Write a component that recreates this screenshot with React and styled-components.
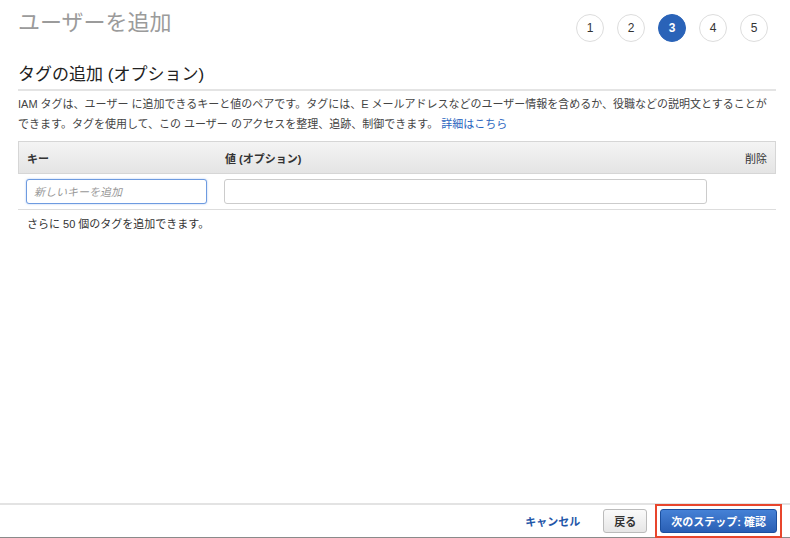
import styled, { createGlobalStyle } from "styled-components"

const GlobalStyle = createGlobalStyle`
    html, body {
        margin: 0;
        padding: 0;
        height: 100%;
        background: #ffffff;
    }
    body {
        font-family: "Liberation Sans", "Noto Sans CJK JP", sans-serif;
        color: #333333;
    }
    #root {
        height: 100%;
    }
`

const steps = [1, 2, 3, 4, 5]

export default function App() {
    return (
        <>
            <GlobalStyle />
            <Pagina>
                <Conteudo>
                    <Cabecalho>
                        <Titulo>ユーザーを追加</Titulo>
                        <Passos>
                            {steps.map((n) => (
                                <Passo key={n} ativo={n === 3}>{n}</Passo>
                            ))}
                        </Passos>
                    </Cabecalho>

                    <Secao>タグの追加 (オプション)</Secao>
                    <Descricao>
                        IAM タグは、ユーザー に追加できるキーと値のペアです。タグには、E メールアドレスなどのユーザー情報を含めるか、役職などの説明文とすることができます。タグを使用して、この ユーザー のアクセスを整理、追跡、制御できます。 <Link href="#">詳細はこちら</Link>
                    </Descricao>

                    <Tabela>
                        <Cabeca>
                            <ColChave>キー</ColChave>
                            <ColValor>値 (オプション)</ColValor>
                            <ColExcluir>削除</ColExcluir>
                        </Cabeca>
                        <Linha>
                            <ColChave>
                                <Campo foco placeholder="新しいキーを追加" />
                            </ColChave>
                            <ColValor>
                                <Campo />
                            </ColValor>
                            <ColExcluir />
                        </Linha>
                    </Tabela>
                    <Restante>さらに 50 個のタグを追加できます。</Restante>
                </Conteudo>

                <Rodape>
                    <Cancelar href="#">キャンセル</Cancelar>
                    <Voltar>戻る</Voltar>
                    <Destaque>
                        <Proximo>次のステップ: 確認</Proximo>
                    </Destaque>
                </Rodape>
            </Pagina>
        </>
    )
}

const Pagina = styled.div`
    display: flex;
    flex-direction: column;
    height: 538px;
    box-sizing: border-box;
    border-bottom: 1px solid #8a8a8a;
`

const Conteudo = styled.div`
    flex: 1;
    padding: 0 14px 0 18px;
`

const Cabecalho = styled.div`
    display: flex;
    justify-content: space-between;
    align-items: flex-start;
    height: 56px;
`

const Titulo = styled.h1`
    margin: 9px 0 0 0;
    font-size: 22px;
    line-height: 28px;
    font-weight: 400;
    color: #9b9b9b;
`

const Passos = styled.div`
    display: flex;
    gap: 13px;
    margin-top: 14px;
    margin-right: 8px;
`

const Passo = styled.div`
    width: 28px;
    height: 28px;
    box-sizing: border-box;
    border-radius: 50%;
    display: flex;
    align-items: center;
    justify-content: center;
    font-size: 12px;
    font-weight: ${(props) => (props.ativo ? 700 : 400)};
    color: ${(props) => (props.ativo ? "#ffffff" : "#333333")};
    background: ${(props) => (props.ativo ? "#2a63b8" : "#ffffff")};
    border: 1px solid ${(props) => (props.ativo ? "#2a63b8" : "#dddddd")};
`

const Secao = styled.h2`
    margin: 8px 0 0 0;
    padding-bottom: 3px;
    font-size: 17px;
    line-height: 22px;
    font-weight: 400;
    color: #222222;
    border-bottom: 2px solid #e4e4e4;
`

const Descricao = styled.p`
    margin: 3px 0 0 0;
    font-size: 11px;
    line-height: 20px;
    color: #444444;
`

const Link = styled.a`
    color: #2b66c0;
    text-decoration: none;
`

const Tabela = styled.div`
    margin-top: 7px;
    border-bottom: 1px solid #dddddd;
`

const Cabeca = styled.div`
    display: flex;
    align-items: center;
    height: 33px;
    box-sizing: border-box;
    background: linear-gradient(#f4f4f4, #e4e4e4);
    border: 1px solid #d6d6d6;
    font-size: 11px;
    font-weight: 700;
    color: #333333;
`

const Linha = styled.div`
    display: flex;
    align-items: center;
    height: 35px;
`

const ColChave = styled.div`
    width: 206px;
    padding: 0 17px 0 8px;
    box-sizing: border-box;
`

const ColValor = styled.div`
    width: 483px;
    box-sizing: border-box;
`

const ColExcluir = styled.div`
    flex: 1;
    text-align: right;
    padding-right: 8px;
    font-weight: 400;
`

const Campo = styled.input`
    display: block;
    width: 100%;
    height: 25px;
    box-sizing: border-box;
    border-radius: 3px;
    border: 1px solid ${(props) => (props.foco ? "#6e9be0" : "#cccccc")};
    box-shadow: ${(props) => (props.foco ? "0 0 2px rgba(80, 140, 230, 0.5)" : "none")};
    padding: 0 7px;
    font-family: "Liberation Sans", "Noto Sans CJK JP", sans-serif;
    font-size: 11px;
    outline: none;
    &::placeholder {
        color: #999999;
        font-style: italic;
    }
`

const Restante = styled.p`
    margin: 6px 0 0 9px;
    font-size: 11px;
    line-height: 16px;
    color: #333333;
`

const Rodape = styled.div`
    display: flex;
    align-items: center;
    justify-content: flex-end;
    height: 34px;
    box-sizing: border-box;
    border-top: 2px solid #e3e3e3;
    padding-right: 8px;
`

const Cancelar = styled.a`
    font-size: 11px;
    font-weight: 700;
    color: #1f56a8;
    text-decoration: none;
    margin-right: 23px;
`

const Voltar = styled.button`
    height: 24px;
    padding: 0 10px;
    border: 1px solid #bbbbbb;
    border-radius: 3px;
    background: linear-gradient(#fafafa, #e6e6e6);
    font-family: "Liberation Sans", "Noto Sans CJK JP", sans-serif;
    font-size: 11px;
    font-weight: 700;
    color: #333333;
    margin-right: 8px;
`

const Destaque = styled.div`
    padding: 3px;
    border: 2px solid #e8452c;
    display: flex;
`

const Proximo = styled.button`
    height: 24px;
    padding: 0 10px;
    border: 1px solid #1b4f9e;
    border-radius: 3px;
    background: linear-gradient(#4581d6, #2a5fb4);
    font-family: "Liberation Sans", "Noto Sans CJK JP", sans-serif;
    font-size: 11px;
    font-weight: 700;
    color: #ffffff;
`
